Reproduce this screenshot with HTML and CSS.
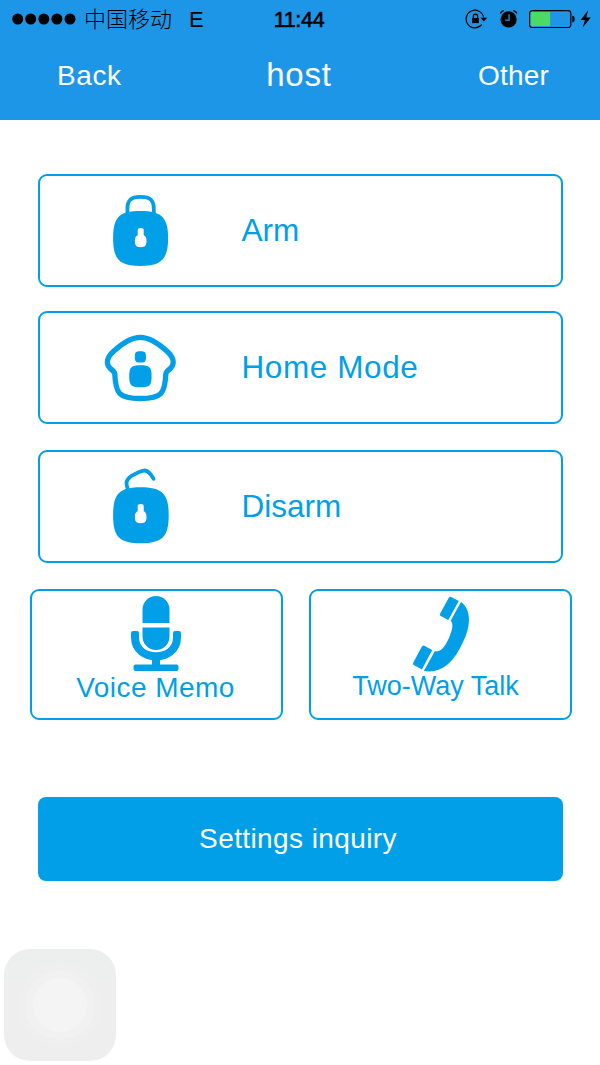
FILE: index.html
```html
<!DOCTYPE html>
<html lang="en">
<head>
    <meta charset="UTF-8">
    <meta name="viewport" content="width=device-width, initial-scale=1.0">
    <title>host</title>
    <link rel="stylesheet" href="styles.css">
</head>
<body>
    <header class="header">
        <div class="status-bar">
            <div class="status-left">
                <svg class="signal" width="64" height="12" viewBox="0 0 64 12">
                    <circle cx="5.7" cy="6" r="5.5"/>
                    <circle cx="18.7" cy="6" r="5.5"/>
                    <circle cx="31.8" cy="6" r="5.5"/>
                    <circle cx="44.9" cy="6" r="5.5"/>
                    <circle cx="58" cy="6" r="5.5"/>
                </svg>
                <span class="carrier">中国移动</span>
                <span class="network">E</span>
            </div>
            <div class="clock">11:44</div>
            <svg class="status-icons" width="134" height="28" viewBox="0 0 134 28">
                <!-- rotation lock -->
                <path d="M16.7 19.7A8.8 8.8 0 1 1 18.6 12.3" fill="none" stroke="#000" stroke-width="1.2"/>
                <path d="M15.5 12.7h6.6l-3.3 3.7z"/>
                <path d="M7 12.9h6.9v5.2H7z"/>
                <path d="M8.3 13v-1.8a2.15 2.15 0 0 1 4.3 0V13" fill="none" stroke="#000" stroke-width="1.2"/>
                <!-- alarm -->
                <circle cx="43.6" cy="14.4" r="8.1"/>
                <path d="M35.3 8.5a5 5 0 0 1 3.6-3M48.3 5.5a5 5 0 0 1 3.6 3" fill="none" stroke="#000" stroke-width="1.4"/>
                <path d="M44.1 9.2v6h-4" fill="none" stroke="#1e96e8" stroke-width="1.3"/>
                <!-- battery -->
                <rect x="64.6" y="5.7" width="41.2" height="16.8" rx="2.8" fill="none" stroke="#000" stroke-width="1.2"/>
                <rect x="65.8" y="7" width="19.3" height="14" fill="#4cd964"/>
                <path d="M107.3 10.8c3.2 0 3.2 6.8 0 6.8z"/>
                <path d="M123.2 5.3L115.6 15h4.4l-2.3 7.4 8.1-9.8h-4.5z"/>
            </svg>
        </div>
        <nav class="nav-bar">
            <a class="nav-link nav-back">Back</a>
            <h1>host</h1>
            <a class="nav-link nav-other">Other</a>
        </nav>
    </header>

    <main class="content">
        <div class="mode-list">
            <button class="mode-btn">
                <svg class="mode-icon" width="80" height="80" viewBox="0 0 80 80">
                    <path class="line" d="M27.4 25.5V19C27.4 10 31 6.9 40.6 6.9S53.8 10 53.8 19V25.5" stroke-width="3.8"/>
                    <path d="M40.5 21C62 21 68.1 28 68.1 48.2S62 76 40.5 76 13.1 69 13.1 48.2 19 21 40.5 21z"/>
                    <path class="hole" d="M40.7 38c2.2 0 3 .7 3 2.5v4.8c2 1 2.8 2.6 2.8 5.5 0 5-1.3 6.4-5.8 6.4s-5.8-1.4-5.8-6.4c0-2.9.8-4.5 2.8-5.5v-4.8c0-1.8.8-2.5 3-2.5z"/>
                </svg>
                <span class="label-arm">Arm</span>
            </button>
            <button class="mode-btn mode-home">
                <svg class="mode-icon" width="80" height="80" viewBox="0 0 80 80">
                    <path class="line" d="M40.3 10.4C49 10.4 58.5 16.5 67 24.2C73.5 30 75.5 36.5 70 41.7C67.5 44 66 44.5 65.8 47C65.1 66.5 61.5 71.5 40.3 71.5S15.5 66.5 14.8 47C14.6 44.5 13.1 44 10.6 41.7C5.1 36.5 7.1 30 13.6 24.2C22.1 16.5 31.6 10.4 40.3 10.4z" stroke-width="5.3"/>
                    <path d="M40.4 24.2c4.6 0 5.6 1 5.6 5.7s-1 5.7-5.6 5.7-5.6-1-5.6-5.7 1-5.7 5.6-5.7z"/>
                    <path d="M40.4 38.2c9.2 0 11.2 2 11.2 11s-2 11-11.2 11-11.2-2-11.2-11 2-11 11.2-11z"/>
                </svg>
                <span class="label-home">Home Mode</span>
            </button>
            <button class="mode-btn mode-disarm">
                <svg class="mode-icon" width="80" height="80" viewBox="0 0 80 80">
                    <path class="line" d="M28 23.5C25.2 16.3 26.2 14 31.5 9.8C43.5 3.1 46.1 3 50.5 8.2L53.6 12.8" stroke-width="3.8" stroke-linecap="round"/>
                    <path d="M40.7 21.2C62.5 21.2 68.7 28 68.7 49.2S62.5 77.2 40.7 77.2 13.1 70.4 13.1 49.2 18.9 21.2 40.7 21.2z"/>
                    <path class="hole" d="M40.7 38c2.2 0 3 .7 3 2.5v4.8c2 1 2.8 2.6 2.8 5.5 0 5-1.3 6.4-5.8 6.4s-5.8-1.4-5.8-6.4c0-2.9.8-4.5 2.8-5.5v-4.8c0-1.8.8-2.5 3-2.5z"/>
                </svg>
                <span>Disarm</span>
            </button>
        </div>

        <div class="action-row">
            <button class="action-btn action-voice">
                <svg width="60" height="76" viewBox="0 0 60 76">
                    <path d="M16.5 27V13.5a13.5 13.5 0 0 1 27 0V27z"/>
                    <path d="M16.5 31.5h27v9a13.5 13.5 0 0 1-27 0z"/>
                    <path class="line" d="M9 37v4.5c0 25 42 25 42 0V37" stroke-width="8"/>
                    <rect x="5" y="35" width="8" height="6" rx="2"/>
                    <rect x="47" y="35" width="8" height="6" rx="2"/>
                    <path d="M26 61h8v9h-8z"/>
                    <rect x="7.5" y="68.4" width="45" height="6.6" rx="2"/>
                </svg>
                <span>Voice Memo</span>
            </button>
            <button class="action-btn action-talk">
                <svg width="60" height="76" viewBox="0 0 60 76">
                    <path d="M40.7 0.8L48.8 5 38.3 24 30 19.6Q29.6 18.6 30.3 17.2L38.5 2.2Q39.4.4 40.7.8z"/>
                    <path d="M51 6C61 13 61.5 29 53 46C43.5 67.5 31 77.5 13.8 75L24.8 55.3C31 56 34.5 51.5 39 42C42 34.5 44 28 40.6 24.8z"/>
                    <path d="M13.8 49.6L22.2 54 11.9 73.4 3.6 69Q2.5 68.2 3.3 66.4L11.5 51.2Q12.4 49.3 13.8 49.6z"/>
                </svg>
                <span>Two-Way Talk</span>
            </button>
        </div>

        <button class="settings-btn">Settings inquiry</button>
    </main>

    <div class="assistive-touch">
        <div class="ring">
            <div class="dot"></div>
        </div>
    </div>
</body>
</html>
```
FILE: styles.css
```css
* {
    box-sizing: border-box;
}
body {
    margin: 0;
    height: 1065px;
    overflow: hidden;
    background: #fff;
    font-family: "Liberation Sans", "Noto Sans CJK SC", sans-serif;
}
button {
    font-family: inherit;
    margin: 0;
    cursor: pointer;
}
.header {
    height: 120px;
    background: #1e96e8;
}
.status-bar {
    height: 38px;
    display: grid;
    grid-template-columns: 257px 60px 1fr;
    align-items: center;
    padding: 0 1px 0 12px;
}
.status-left {
    display: flex;
    align-items: center;
}
.carrier {
    margin-left: 8px;
    padding-bottom: 3px;
    font-size: 22px;
    line-height: 35px;
    font-weight: 300;
    font-family: "Noto Sans CJK SC", sans-serif;
}
.network {
    margin-left: 17px;
    padding-top: 1px;
    font-size: 22px;
}
.clock {
    padding-top: 2px;
    font-size: 21.5px;
    font-weight: 500;
    letter-spacing: -0.3px;
    text-align: center;
    -webkit-text-stroke: 0.6px #000;
    white-space: nowrap;
}
.status-icons {
    justify-self: end;
}
.nav-bar {
    height: 76px;
    display: grid;
    grid-template-columns: 1fr 100px 1fr;
    align-items: center;
    padding: 0 51px 0 57px;
    color: #fff;
}
.nav-bar h1 {
    margin: 0 8px 2px 0;
    font-size: 33px;
    font-weight: normal;
    letter-spacing: 0.8px;
    text-align: center;
}
.nav-link {
    font-size: 28px;
}
.nav-back {
    letter-spacing: 0.6px;
}
.nav-other {
    letter-spacing: 0.2px;
    text-align: right;
}
.content {
    padding: 54px 28px 0 30px;
}
.mode-list {
    display: flex;
    flex-direction: column;
    gap: 25px;
    padding: 0 9.5px 0 7.5px;
}
.mode-btn {
    height: 113px;
    display: flex;
    align-items: center;
    padding: 0 0 2px 60px;
    border: 2px solid #029fe9;
    border-radius: 9px;
    background: #fff;
    color: #029fe9;
    font-size: 31.5px;
}
.mode-btn span {
    padding-top: 2px;
}
.mode-icon {
    margin-right: 62px;
}
.mode-home {
    margin-top: -1px;
}
.label-home {
    letter-spacing: 0.6px;
}
.mode-disarm {
    margin-top: 1px;
}
svg {
    flex: none;
    display: block;
}
.content svg {
    fill: #029fe9;
}
.content svg .line {
    fill: none;
    stroke: #029fe9;
}
.content svg .hole {
    fill: #fff;
}
.action-row {
    display: grid;
    grid-template-columns: 253px 263px;
    gap: 26px;
    margin-top: 26px;
}
.action-btn {
    height: 131px;
    display: flex;
    flex-direction: column;
    align-items: center;
    padding: 5px 2px 0 0;
    border: 2px solid #029fe9;
    border-radius: 9px;
    background: #fff;
    color: #029fe9;
    font-size: 28px;
    line-height: 32px;
}
.action-voice span {
    letter-spacing: 0.45px;
}
.action-talk {
    font-size: 27px;
    line-height: 29px;
}
.action-talk span {
    margin-right: 8px;
}
.settings-btn {
    display: block;
    width: 525px;
    height: 84px;
    margin: 77px 0 0 7.5px;
    padding: 0 4px 0 0;
    border: none;
    border-radius: 8px;
    background: #029fe9;
    color: #fff;
    font-size: 28px;
    letter-spacing: 0.4px;
}
/* floating button, stays above the page */
.assistive-touch {
    position: absolute;
    left: 4px;
    bottom: 4px;
    width: 112px;
    height: 112px;
    display: flex;
    align-items: center;
    justify-content: center;
    border-radius: 26px;
    background: linear-gradient(#ecefee, #eee 40%);
}
.ring {
    width: 70px;
    height: 70px;
    display: flex;
    align-items: center;
    justify-content: center;
    border-radius: 50%;
    background: #f1f1f1;
    box-shadow: 0 0 0 6px #efefef;
}
.dot {
    width: 54px;
    height: 54px;
    border-radius: 50%;
    background: #f4f4f4;
}
```
